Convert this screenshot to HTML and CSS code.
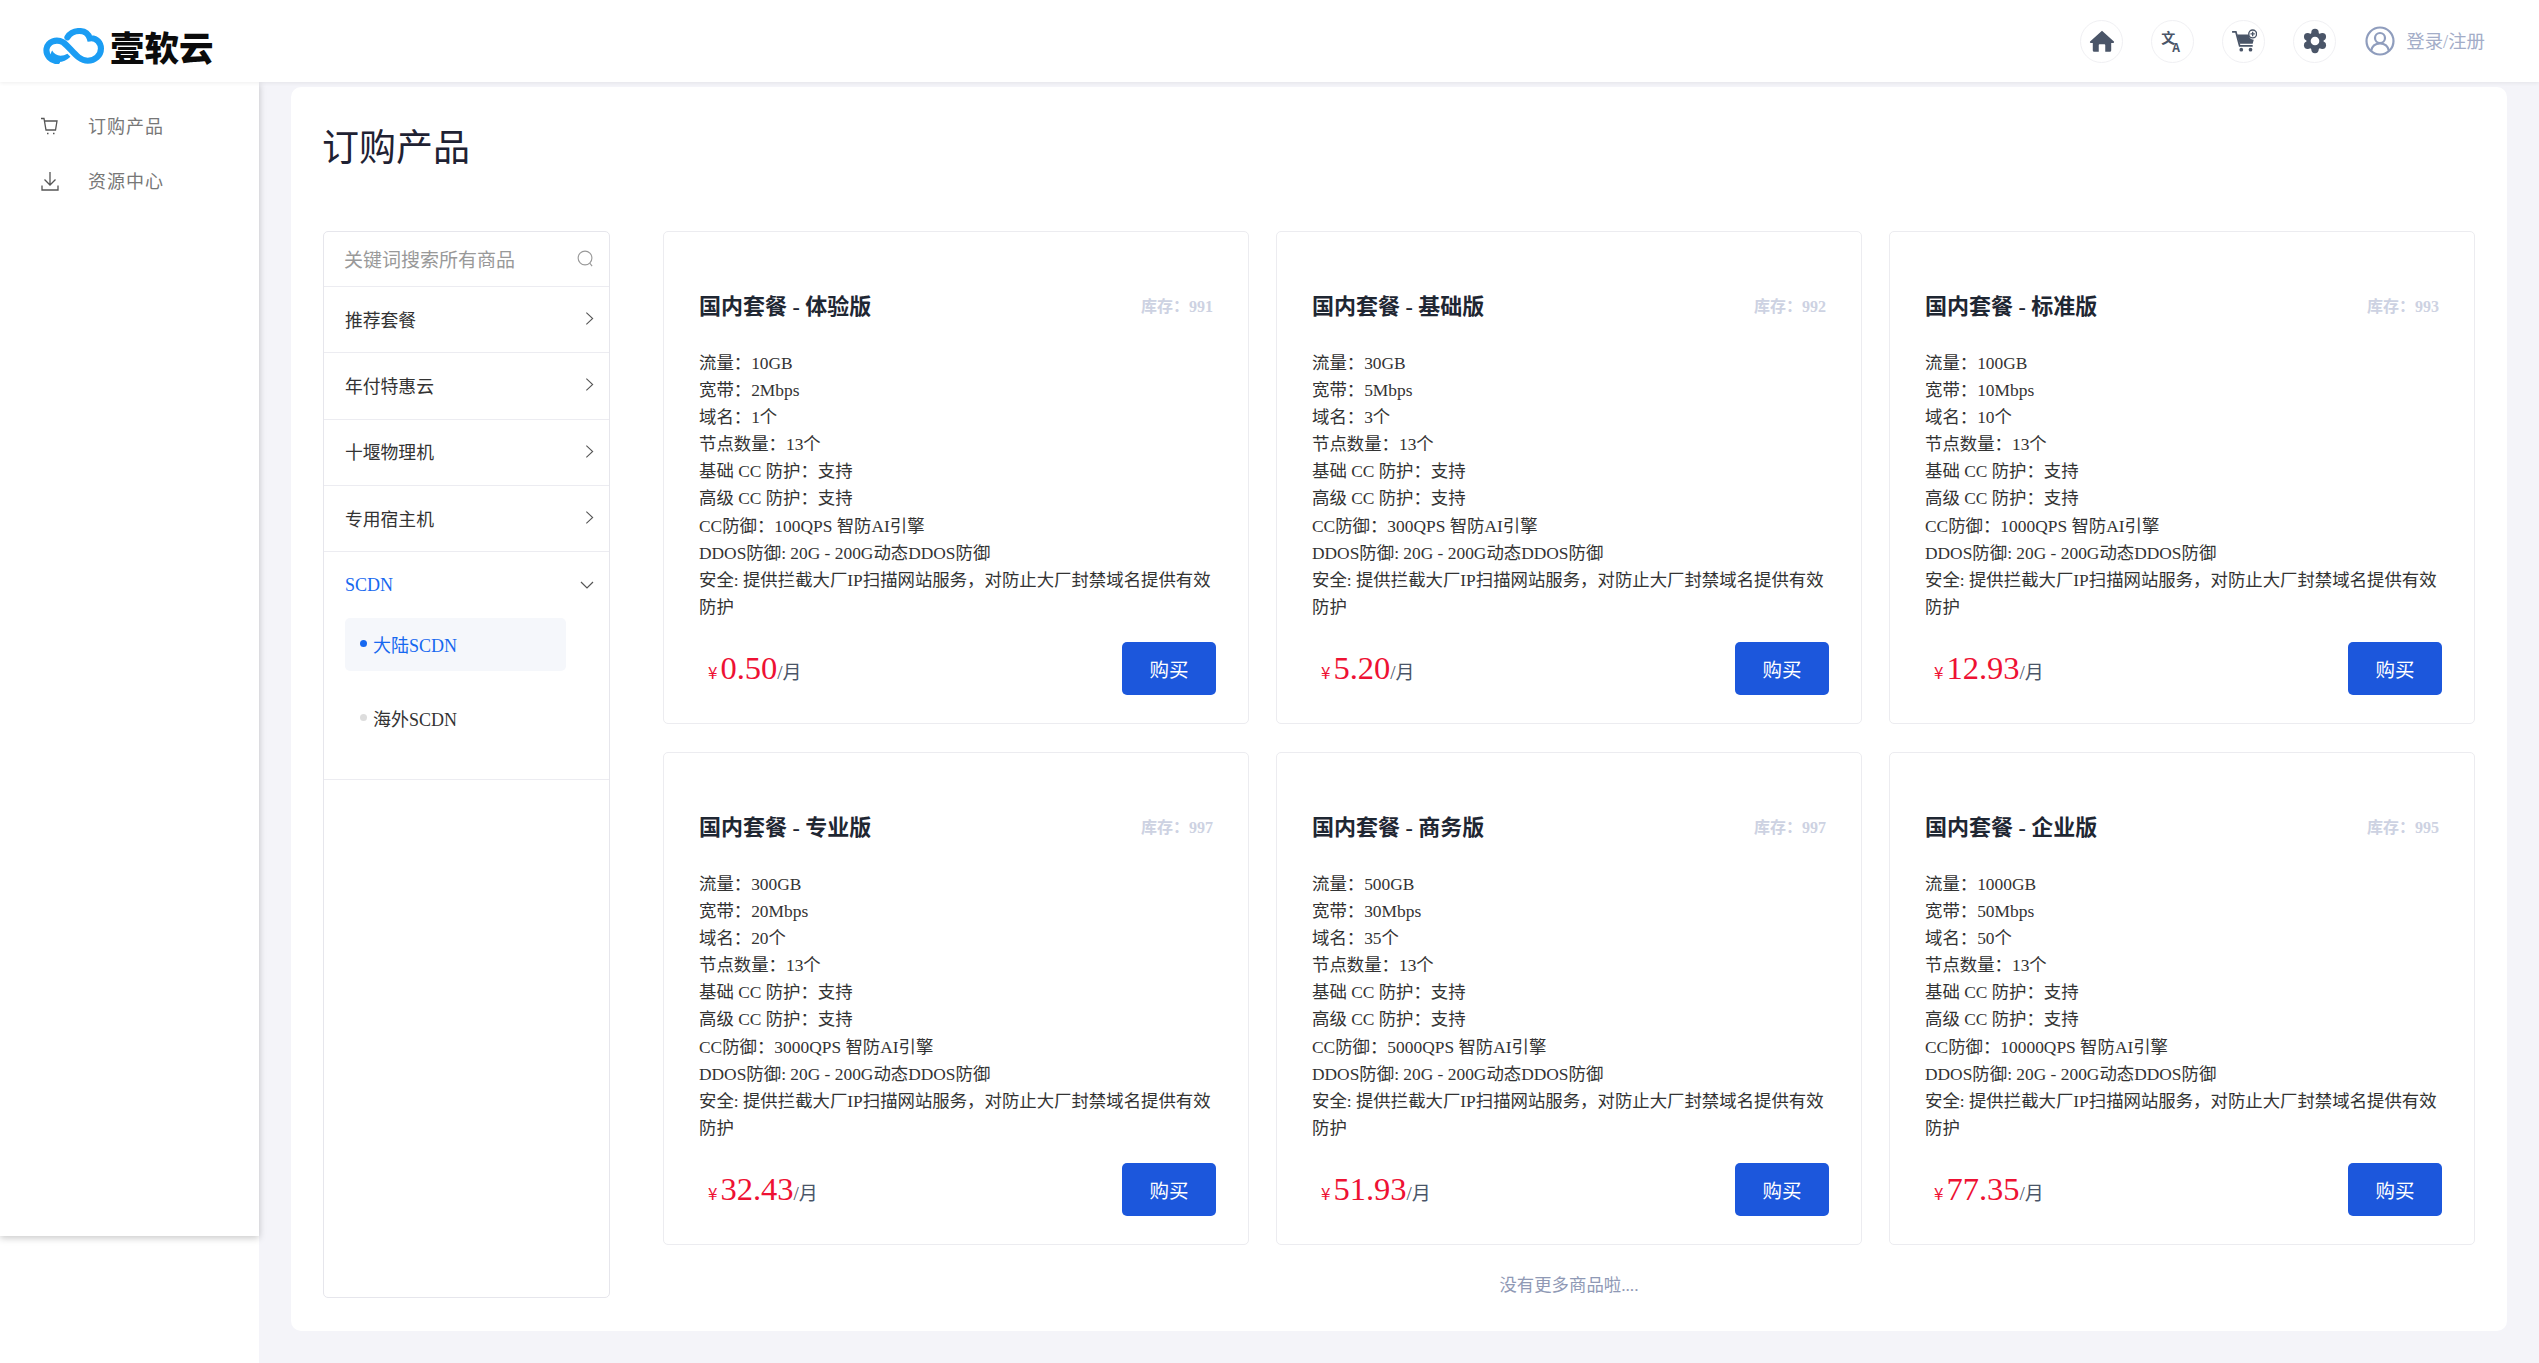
FILE: index.html
```html
<!DOCTYPE html>
<html>

<head>
  <title>订购产品</title>
  <link rel="stylesheet" href="styles.css">
</head>

<body>
  <header class="topbar">
    <div class="logo">
      <svg class="logo-mark" viewBox="0 0 60 35">
        <path d="M24 9C29 1 43 0 46 10C53 9 57 15 57 20C57 27 51 32 44 32C34 32 28 20 20 14C13 10 5 13 3.500 20C2.500 27 8 32 14 32.500" fill="none" stroke="#1b9df3" stroke-width="6" stroke-linecap="round"/>
        <path d="M9 22C12 28 19 28 24 25L27 28C21 34 12 35 8 30C7 28 7.500 24 9 22Z" fill="#1b9df3"/>
      </svg>
      <span class="logo-text">壹软云</span>
    </div>
    <div class="top-actions">
      <a class="round-btn">
        <svg viewBox="0 0 24 24"><path d="M12 2.500L23 12.500C23.400 13 23 13.800 22.400 13.800H20.500V20.500C20.500 21.500 19.700 22 19 22H15V16C15 15.300 14.600 15 14 15H10C9.400 15 9 15.300 9 16V22H5C4.300 22 3.500 21.500 3.500 20.500V13.800H1.600C1 13.800 .600 13 1 12.500Z" fill="#4a5568"/></svg>
      </a>
      <a class="round-btn">
        <span class="tr-icon"><span class="tr-zh">文</span><span class="tr-en">A</span></span>
      </a>
      <a class="round-btn">
        <svg viewBox="0 0 24 24">
          <path d="M1 3.500H4.500L8 16.500H20" fill="none" stroke="#4a5568" stroke-width="1.600"/>
          <path d="M5.500 6H16.500C16.800 9 18 10.500 21 10.800L20 14.500H8Z" fill="#4a5568"/>
          <circle cx="9.500" cy="20" r="1.700" fill="#4a5568"/>
          <circle cx="18" cy="20" r="1.700" fill="#4a5568"/>
          <circle cx="20" cy="5.500" r="3.600" fill="#fff" stroke="#4a5568" stroke-width="1.300"/>
          <path d="M20 3.500V7.500M18 5.500H22" stroke="#4a5568" stroke-width="1.200"/>
        </svg>
      </a>
      <a class="round-btn">
        <svg viewBox="0 0 24 24" fill="#4a5568">
          <circle cx="12" cy="12" r="8"/>
          <circle cx="12" cy="4.200" r="3.400"/>
          <circle cx="12" cy="19.800" r="3.400"/>
          <circle cx="18.800" cy="8.100" r="3.400"/>
          <circle cx="18.800" cy="15.900" r="3.400"/>
          <circle cx="5.200" cy="8.100" r="3.400"/>
          <circle cx="5.200" cy="15.900" r="3.400"/>
          <circle cx="12" cy="12" r="4" fill="#fff"/>
        </svg>
      </a>
      <a class="login">
        <svg class="avatar" viewBox="0 0 30 30">
          <circle cx="15" cy="15" r="13.500" fill="none" stroke="#8f9dbd" stroke-width="2.200"/>
          <circle cx="15" cy="12" r="5" fill="none" stroke="#8f9dbd" stroke-width="2.200"/>
          <path d="M6 25C7 20 10 17.500 15 17.500C20 17.500 23 20 24 25" fill="none" stroke="#8f9dbd" stroke-width="2.200"/>
        </svg>
        <span>登录/注册</span>
      </a>
    </div>
  </header>

  <div class="layout">
    <div class="side-col">
      <nav class="sidebar">
        <a class="nav-item">
          <svg viewBox="0 0 18 18"><path d="M0 1.500H3L5 13H14.500L16 4H3.500" fill="none" stroke="#555" stroke-width="1.300"/><path d="M6 16.500H7.500M12 16.500H13.500" stroke="#555" stroke-width="1.500"/></svg>
          <span>订购产品</span>
        </a>
        <a class="nav-item">
          <svg viewBox="0 0 18 20"><path d="M9 1V14M3.500 8.500L9 14L14.500 8.500M1 14.500V19H17V14.500" fill="none" stroke="#555" stroke-width="1.300"/></svg>
          <span>资源中心</span>
        </a>
      </nav>
    </div>

    <main class="main">
      <section class="content">
        <h1 class="page-title">订购产品</h1>
        <div class="shop">
          <aside class="category">
            <div class="search">
              <span>关键词搜索所有商品</span>
              <svg viewBox="0 0 18 18"><circle cx="8.500" cy="8.500" r="7.300" fill="none" stroke="#999" stroke-width="1.200"/><path d="M13.500 14L16 17" stroke="#999" stroke-width="1.200"/></svg>
            </div>
            <div class="cat-row"><span>推荐套餐</span><svg class="arrow" viewBox="0 0 10 16"><path d="M1.500 1.500L8.500 8L1.500 14.500" /></svg></div>
            <div class="cat-row"><span>年付特惠云</span><svg class="arrow" viewBox="0 0 10 16"><path d="M1.500 1.500L8.500 8L1.500 14.500" /></svg></div>
            <div class="cat-row"><span>十堰物理机</span><svg class="arrow" viewBox="0 0 10 16"><path d="M1.500 1.500L8.500 8L1.500 14.500" /></svg></div>
            <div class="cat-row"><span>专用宿主机</span><svg class="arrow" viewBox="0 0 10 16"><path d="M1.500 1.500L8.500 8L1.500 14.500" /></svg></div>
            <div class="cat-open">
              <div class="cat-head"><span>SCDN</span><svg class="arrow-down" viewBox="0 0 14 8"><path d="M1 1L7 7L13 1" /></svg></div>
              <div class="sub-item active"><i></i>大陆SCDN</div>
              <div class="sub-item"><i></i>海外SCDN</div>
            </div>
          </aside>

          <div class="goods">
            <div class="goods-grid">
              <article class="product">
                <div class="product-head"><h3>国内套餐 - 体验版</h3><span class="stock">库存：991</span></div>
                <div class="specs">
                  <p>流量：10GB</p>
                  <p>宽带：2Mbps</p>
                  <p>域名：1个</p>
                  <p>节点数量：13个</p>
                  <p>基础 CC 防护：支持</p>
                  <p>高级 CC 防护：支持</p>
                  <p>CC防御：100QPS 智防AI引擎</p>
                  <p>DDOS防御: 20G - 200G动态DDOS防御</p>
                  <p>安全: 提供拦截大厂IP扫描网站服务，对防止大厂封禁域名提供有效防护</p>
                </div>
                <div class="product-foot">
                  <div class="price"><small>¥</small><b>0.50</b><span>/月</span></div>
                  <button class="buy">购买</button>
                </div>
              </article>

              <article class="product">
                <div class="product-head"><h3>国内套餐 - 基础版</h3><span class="stock">库存：992</span></div>
                <div class="specs">
                  <p>流量：30GB</p>
                  <p>宽带：5Mbps</p>
                  <p>域名：3个</p>
                  <p>节点数量：13个</p>
                  <p>基础 CC 防护：支持</p>
                  <p>高级 CC 防护：支持</p>
                  <p>CC防御：300QPS 智防AI引擎</p>
                  <p>DDOS防御: 20G - 200G动态DDOS防御</p>
                  <p>安全: 提供拦截大厂IP扫描网站服务，对防止大厂封禁域名提供有效防护</p>
                </div>
                <div class="product-foot">
                  <div class="price"><small>¥</small><b>5.20</b><span>/月</span></div>
                  <button class="buy">购买</button>
                </div>
              </article>

              <article class="product">
                <div class="product-head"><h3>国内套餐 - 标准版</h3><span class="stock">库存：993</span></div>
                <div class="specs">
                  <p>流量：100GB</p>
                  <p>宽带：10Mbps</p>
                  <p>域名：10个</p>
                  <p>节点数量：13个</p>
                  <p>基础 CC 防护：支持</p>
                  <p>高级 CC 防护：支持</p>
                  <p>CC防御：1000QPS 智防AI引擎</p>
                  <p>DDOS防御: 20G - 200G动态DDOS防御</p>
                  <p>安全: 提供拦截大厂IP扫描网站服务，对防止大厂封禁域名提供有效防护</p>
                </div>
                <div class="product-foot">
                  <div class="price"><small>¥</small><b>12.93</b><span>/月</span></div>
                  <button class="buy">购买</button>
                </div>
              </article>

              <article class="product">
                <div class="product-head"><h3>国内套餐 - 专业版</h3><span class="stock">库存：997</span></div>
                <div class="specs">
                  <p>流量：300GB</p>
                  <p>宽带：20Mbps</p>
                  <p>域名：20个</p>
                  <p>节点数量：13个</p>
                  <p>基础 CC 防护：支持</p>
                  <p>高级 CC 防护：支持</p>
                  <p>CC防御：3000QPS 智防AI引擎</p>
                  <p>DDOS防御: 20G - 200G动态DDOS防御</p>
                  <p>安全: 提供拦截大厂IP扫描网站服务，对防止大厂封禁域名提供有效防护</p>
                </div>
                <div class="product-foot">
                  <div class="price"><small>¥</small><b>32.43</b><span>/月</span></div>
                  <button class="buy">购买</button>
                </div>
              </article>

              <article class="product">
                <div class="product-head"><h3>国内套餐 - 商务版</h3><span class="stock">库存：997</span></div>
                <div class="specs">
                  <p>流量：500GB</p>
                  <p>宽带：30Mbps</p>
                  <p>域名：35个</p>
                  <p>节点数量：13个</p>
                  <p>基础 CC 防护：支持</p>
                  <p>高级 CC 防护：支持</p>
                  <p>CC防御：5000QPS 智防AI引擎</p>
                  <p>DDOS防御: 20G - 200G动态DDOS防御</p>
                  <p>安全: 提供拦截大厂IP扫描网站服务，对防止大厂封禁域名提供有效防护</p>
                </div>
                <div class="product-foot">
                  <div class="price"><small>¥</small><b>51.93</b><span>/月</span></div>
                  <button class="buy">购买</button>
                </div>
              </article>

              <article class="product">
                <div class="product-head"><h3>国内套餐 - 企业版</h3><span class="stock">库存：995</span></div>
                <div class="specs">
                  <p>流量：1000GB</p>
                  <p>宽带：50Mbps</p>
                  <p>域名：50个</p>
                  <p>节点数量：13个</p>
                  <p>基础 CC 防护：支持</p>
                  <p>高级 CC 防护：支持</p>
                  <p>CC防御：10000QPS 智防AI引擎</p>
                  <p>DDOS防御: 20G - 200G动态DDOS防御</p>
                  <p>安全: 提供拦截大厂IP扫描网站服务，对防止大厂封禁域名提供有效防护</p>
                </div>
                <div class="product-foot">
                  <div class="price"><small>¥</small><b>77.35</b><span>/月</span></div>
                  <button class="buy">购买</button>
                </div>
              </article>
            </div>
            <div class="no-more">没有更多商品啦....</div>
          </div>
        </div>
      </section>
    </main>
  </div>
</body>

</html>
```

FILE: styles.css
```css
* {
  box-sizing: border-box;
}

body {
  margin: 0;
  height: 100vh;
  overflow: hidden;
  display: flex;
  flex-direction: column;
  background-color: #f4f4f9;
  color: #333;
  font-family: "Liberation Serif", "Noto Sans CJK SC", serif;
}

p,
h1,
h3 {
  margin: 0;
  font-weight: normal;
}

.topbar {
  height: 82px;
  flex: none;
  display: flex;
  align-items: center;
  justify-content: space-between;
  padding: 0 54px 0 43px;
  background-color: #fff;
  box-shadow: 0 1px 4px rgba(0, 0, 0, 0.07);
  position: relative;
  z-index: 2;
}

.logo {
  display: flex;
  align-items: center;
  gap: 6px;
  margin-top: 9px;
}

.logo-mark {
  width: 61px;
  height: 36px;
}

.logo-text {
  font-family: "Noto Sans CJK SC", sans-serif;
  font-size: 34.500px;
  font-weight: 900;
  line-height: 36px;
  color: #0b0b0b;
}

.top-actions {
  display: flex;
  align-items: center;
  gap: 28px;
}

.round-btn {
  width: 43px;
  height: 43px;
  display: flex;
  align-items: center;
  justify-content: center;
  border: 1.5px solid #f0f0f3;
  border-radius: 50%;
}

.round-btn svg {
  width: 26px;
  height: 26px;
}

.tr-icon {
  width: 23px;
  height: 23px;
  display: flex;
  color: #4a5568;
  font-family: "Noto Sans CJK SC", sans-serif;
  font-weight: 700;
}

.tr-zh {
  font-size: 14px;
  line-height: 15px;
}

.tr-en {
  align-self: flex-end;
  margin-left: -3px;
  font-size: 12px;
  line-height: 12px;
}

.login {
  display: flex;
  align-items: center;
  gap: 11px;
  margin-left: 1px;
  font-size: 18.400px;
  color: #a3adc8;
}

.login span {
  padding-bottom: 2px;
}

.avatar {
  width: 30px;
  height: 30px;
}

.layout {
  flex: 1;
  display: flex;
  min-height: 0;
}

.side-col {
  width: 259px;
  flex: none;
  background-color: #fff;
  position: relative;
  z-index: 1;
}

.sidebar {
  height: 1154px;
  padding-top: 15px;
  background-color: #fff;
  box-shadow: 0 2px 7px rgba(0, 0, 0, 0.22);
}

.nav-item {
  height: 55.500px;
  display: flex;
  align-items: center;
  gap: 29px;
  padding-left: 41px;
  font-size: 18px;
  letter-spacing: 1px;
  color: #777;
}

.nav-item svg {
  width: 18px;
  height: 20px;
  margin-top: 2px;
}

.main {
  flex: 1;
  padding: 5px 32px 32px;
  min-width: 0;
}

.content {
  height: 100%;
  padding: 0 32px;
  background-color: #fff;
  border-radius: 10px;
}

.page-title {
  height: 144px;
  padding-top: 37px;
  margin-left: -1px;
  font-size: 37px;
  line-height: 50px;
  font-weight: 400;
  color: #1f2233;
}

.shop {
  display: flex;
  gap: 53px;
  align-items: flex-start;
}

.category {
  width: 287px;
  height: 1067px;
  flex: none;
  border: 1.5px solid #e6e6ec;
  border-radius: 5px;
}

.search {
  height: 55px;
  display: flex;
  align-items: center;
  justify-content: space-between;
  padding: 0 15px 1px 20px;
  border-bottom: 1.5px solid #ececf1;
  font-size: 19px;
  color: #999;
}

.search svg {
  width: 17px;
  height: 17px;
}

.cat-row {
  height: 66.300px;
  display: flex;
  align-items: center;
  justify-content: space-between;
  padding: 0 15px 2px 21px;
  border-bottom: 1.5px solid #ececf1;
  font-size: 17.800px;
}

.arrow {
  width: 9px;
  height: 15px;
}

.arrow path,
.arrow-down path {
  fill: none;
  stroke: #555;
  stroke-width: 1.200;
}

.cat-open {
  height: 228px;
  padding: 0 21px;
  border-bottom: 1.5px solid #ececf1;
  font-size: 18px;
}

.cat-head {
  height: 66px;
  display: flex;
  align-items: center;
  justify-content: space-between;
  margin-right: -6px;
  color: #1668f0;
}

.arrow-down {
  width: 14px;
  height: 8px;
}

.sub-item {
  width: 221px;
  height: 53px;
  display: flex;
  align-items: center;
  padding: 0 0 2px 15px;
  margin-bottom: 21px;
  border-radius: 5px;
  color: #333;
}

.sub-item i {
  width: 7px;
  height: 7px;
  margin-right: 6px;
  border-radius: 50%;
  background-color: #ddd;
}

.sub-item.active {
  background-color: #f5f7fb;
  color: #1668f0;
}

.sub-item.active i {
  background-color: #1668f0;
}

.goods {
  flex: 1;
  min-width: 0;
}

.goods-grid {
  display: grid;
  grid-template-columns: repeat(3, 586px);
  grid-auto-rows: 493px;
  column-gap: 27px;
  row-gap: 28px;
}

.product {
  padding: 53px 32px 27px 35px;
  border: 1.5px solid #ececf0;
  border-radius: 5px;
}

.product-head {
  height: 38px;
  display: flex;
  align-items: center;
  justify-content: space-between;
  margin-bottom: 27px;
  padding-right: 3px;
}

.product-head h3 {
  font-size: 22px;
  font-weight: 700;
  color: #1f2733;
}

.stock {
  padding-top: 2px;
  font-size: 16px;
  font-weight: 700;
  color: #cdd2e2;
}

.specs {
  font-size: 17.400px;
  line-height: 27.100px;
  color: #333;
}

.product-foot {
  height: 53px;
  margin-top: 21px;
  display: flex;
  align-items: center;
  justify-content: space-between;
}

.price {
  padding-left: 9px;
  color: #ee1133;
}

.price small {
  font-family: "Noto Sans CJK SC", sans-serif;
  font-size: 17px;
  margin-right: 3px;
}

.price b {
  font-size: 32.500px;
  font-weight: normal;
}

.price span {
  font-size: 19px;
  color: #4a5568;
}

.buy {
  width: 94px;
  height: 53px;
  padding: 0;
  border: none;
  border-radius: 5px;
  background-color: #1c57dc;
  color: #fff;
  font-family: inherit;
  font-size: 19.500px;
  cursor: pointer;
}

.no-more {
  margin-top: 27px;
  text-align: center;
  font-size: 17.400px;
  line-height: 26px;
  color: #8f99b5;
}
```
